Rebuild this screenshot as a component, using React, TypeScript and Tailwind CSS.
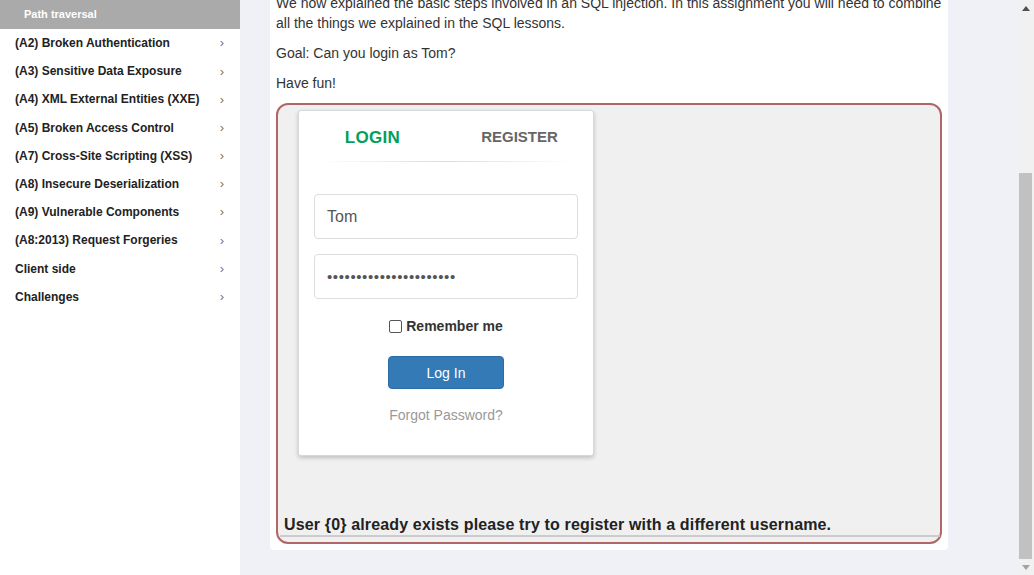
import React from 'react';

const menu = [
  '(A2) Broken Authentication',
  '(A3) Sensitive Data Exposure',
  '(A4) XML External Entities (XXE)',
  '(A5) Broken Access Control',
  '(A7) Cross-Site Scripting (XSS)',
  '(A8) Insecure Deserialization',
  '(A9) Vulnerable Components',
  '(A8:2013) Request Forgeries',
  'Client side',
  'Challenges',
];

const Sidebar: React.FC = () => (
  <aside className="w-[240px] shrink-0 bg-white">
    <div className="h-[29px] bg-[#aaaaaa] pl-6 flex items-center text-[11px] font-bold text-white">
      Path traversal
    </div>
    <ul>
      {menu.map((m) => (
        <li key={m} className="h-[28.2px] flex items-center justify-between pl-[15px] pr-[16px] text-[12px] font-bold text-[#222]">
          <span>{m}</span>
          <span className="text-[#777] font-normal text-[13px]">›</span>
        </li>
      ))}
    </ul>
  </aside>
);

const LoginCard: React.FC = () => (
  <div className="w-[296px] h-[346px] bg-white rounded-[3px] border border-[#d8d8d8] shadow-[0_2px_4px_rgba(0,0,0,0.2)] flex flex-col">
    <div className="flex items-start pt-[17px]">
      <div className="w-1/2 text-center text-[17px] font-bold text-[#029f5b] tracking-[0.3px]">LOGIN</div>
      <div className="w-1/2 text-center text-[15px] font-bold text-[#666] -mt-[1px]">REGISTER</div>
    </div>
    <div className="mx-[20px] mt-[13px] h-px bg-gradient-to-r from-transparent via-[#dcdcdc] to-transparent" />
    <div className="px-[15px] pt-[32px]">
      <div className="h-[45px] rounded-[4px] border border-[#dddddd] flex items-center px-[12px] text-[16px] text-[#555]">Tom</div>
      <div className="h-[45px] mt-[15px] rounded-[4px] border border-[#dddddd] flex items-center px-[12px] text-[15px] text-[#555] tracking-[0.6px]">
        ••••••••••••••••••••••
      </div>
    </div>
    <div className="flex items-center justify-center mt-[17px] gap-[4px]">
      <span className="w-[13px] h-[13px] border border-[#555] rounded-[2px] bg-white" />
      <span className="text-[14px] font-bold text-[#333]">Remember me</span>
    </div>
    <div className="flex justify-center mt-[20px]">
      <div className="w-[116px] h-[33px] rounded-[4px] bg-[#337ab7] border border-[#2e6da4] flex items-center justify-center text-[14px] text-white">
        Log In
      </div>
    </div>
    <div className="text-center mt-[16px] text-[14px] text-[#999]">Forgot Password?</div>
  </div>
);

const Scrollbar: React.FC = () => (
  <div className="w-[17px] shrink-0 bg-[#f1f1f1] flex flex-col items-center">
    <div className="h-[17px] flex items-center justify-center">
      <svg width="8" height="5" viewBox="0 0 8 5"><path d="M4 0L8 5H0z" fill="#505050" /></svg>
    </div>
    <div className="h-[156px]" />
    <div className="w-[13px] h-[386px] bg-[#c1c1c1]" />
    <div className="flex-1 flex items-center justify-center">
      <svg width="8" height="5" viewBox="0 0 8 5"><path d="M0 0H8L4 5z" fill="#a3a3a3" /></svg>
    </div>
  </div>
);

export default function App() {
  return (
    <div className="w-[1034px] h-[575px] overflow-hidden flex bg-[#f0f1f6] font-['Liberation_Sans',Arial,sans-serif]">
      <Sidebar />
      <main className="flex-1 pl-[30px] pr-[69px]">
        <div className="-mt-[7px] bg-white rounded-b-[4px] px-[6px] pb-[6px] text-[14px] leading-[20px] text-[#333]">
          <p>
            We now explained the basic steps involved in an SQL injection. In this assignment you will need to combine all the things we explained in the SQL lessons.
          </p>
          <p className="mt-[10px]">Goal: Can you login as Tom?</p>
          <p className="mt-[10px]">Have fun!</p>
          <div className="mt-[10px] h-[441px] border-2 border-[#b06666] rounded-[12px] bg-[#f0f0f0] flex flex-col pl-[20px] pr-[2px] pt-[5px] pb-[5px]">
            <LoginCard />
            <div className="flex-1" />
            <div className="-ml-[14px] text-[16px] font-bold text-[#222] leading-[20px] tracking-[0.15px]">
              User {'{0}'} already exists please try to register with a different username.
            </div>
            <div className="-ml-[18px] -mr-[2px] h-[2px] bg-[#cccccc]" />
          </div>
        </div>
      </main>
      <Scrollbar />
    </div>
  );
}
